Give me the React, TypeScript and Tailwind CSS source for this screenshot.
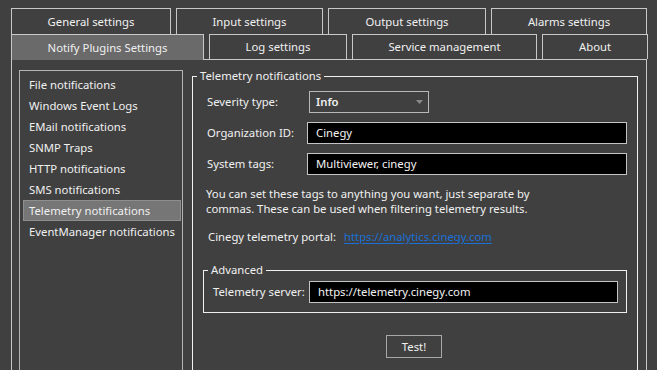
import React from "react";

const topTabs = [
  { label: "General settings", w: "w-[160px]" },
  { label: "Input settings", w: "w-[147px]" },
  { label: "Output settings", w: "w-[158px]" },
  { label: "Alarms settings", w: "w-[156px]" },
];

const bottomTabs = [
  { label: "Notify Plugins Settings", w: "w-[193px]", active: true },
  { label: "Log settings", w: "w-[138px]" },
  { label: "Service management", w: "w-[185px]" },
  { label: "About", w: "w-[106px]" },
];

const plugins = [
  "File notifications",
  "Windows Event Logs",
  "EMail notifications",
  "SNMP Traps",
  "HTTP notifications",
  "SMS notifications",
  "Telemetry notifications",
  "EventManager notifications",
];

function TextBox({ value, className = "" }: { value: string; className?: string }) {
  return (
    <div className={`h-[22px] bg-black border border-[#c4c4c4] flex items-center px-[8px] text-[#f2f2f2] whitespace-nowrap ${className}`}>
      {value}
    </div>
  );
}

export default function App() {
  return (
    <div
      className="w-[657px] h-[370px] overflow-hidden bg-[#404040] text-[#f0f0f0] text-[11.3px] leading-[16px] pt-[8px] pl-[11px]"
      style={{ fontFamily: '"Noto Sans", "Segoe UI", sans-serif' }}
    >
      {/* tab rows */}
      <div className="flex gap-[5px]">
        {topTabs.map((t) => (
          <div
            key={t.label}
            className={`${t.w} h-[26px] border-t border-x border-[#c8c8c8] flex items-center justify-center`}
          >
            {t.label}
          </div>
        ))}
      </div>
      <div className="flex gap-[5px]">
        {bottomTabs.map((t) => (
          <div
            key={t.label}
            className={`${t.w} border-t border-x border-[#c8c8c8] flex items-center justify-center ${
              t.active ? "h-[26px] -mb-px relative z-10 bg-[#6a6a6a]" : "h-[25px]"
            }`}
          >
            {t.label}
          </div>
        ))}
      </div>

      {/* panel */}
      <div className="w-[636px] h-[400px] border-t border-x border-[#c8c8c8] flex items-start pt-[10px] pl-[7px]">
        {/* list box */}
        <div className="w-[164px] shrink-0 h-[360px] border border-[#b4b4b4] pt-[3px] pl-[3px] pr-[1px]">
          {plugins.map((p) => (
            <div
              key={p}
              className={`h-[21px] flex items-center pl-[5px] whitespace-nowrap ${
                p === "Telemetry notifications" ? "bg-[#767676] border border-[#8e8e8e]" : "border border-transparent"
              }`}
            >
              {p}
            </div>
          ))}
        </div>

        {/* group box */}
        <div className="relative ml-[9px] mt-[6px] w-[446px] shrink-0 h-[360px] border border-[#f0f0f0] pt-[14px] pl-[14px] pr-[10px]">
          <span className="absolute -top-[9px] left-[4px] px-[3px] bg-[#404040] whitespace-nowrap">Telemetry notifications</span>

          <div className="flex items-center h-[22px]">
            <span className="w-[102px] shrink-0">Severity type:</span>
            <div className="w-[120px] h-[22px] border border-[#b8b8b8] flex items-center justify-between pl-[6px] pr-[5px]">
              <span className="font-semibold">Info</span>
              <svg width="7" height="4" viewBox="0 0 7 4">
                <path d="M0 0h7L3.5 4z" fill="#8a8a8a" />
              </svg>
            </div>
          </div>

          <div className="flex items-center mt-[9px]">
            <span className="w-[100px] shrink-0">Organization ID:</span>
            <TextBox value="Cinegy" className="flex-1" />
          </div>

          <div className="flex items-center mt-[9px]">
            <span className="w-[100px] shrink-0">System tags:</span>
            <TextBox value="Multiviewer, cinegy" className="flex-1" />
          </div>

          <p className="mt-[11px] -ml-px leading-[15px]">
            You can set these tags to anything you want, just separate by
            <br />
            commas. These can be used when filtering telemetry results.
          </p>

          <div className="flex items-center mt-[13px] ml-px h-[16px] whitespace-nowrap">
            <span className="w-[136px] shrink-0">Cinegy telemetry portal:</span>
            <span className="text-[#1a70d6] underline underline-offset-2">https://analytics.cinegy.com</span>
          </div>

          {/* advanced */}
          <div className="relative mt-[25px] -ml-[4px] h-[43px] border border-[#f0f0f0] pt-[10px] pl-[9px] pr-[8px]">
            <span className="absolute -top-[9px] left-[4px] px-[3px] bg-[#404040]">Advanced</span>
            <div className="flex items-center">
              <span className="w-[96px] shrink-0 whitespace-nowrap">Telemetry server:</span>
              <TextBox value="https://telemetry.cinegy.com" className="flex-1" />
            </div>
          </div>

          <div className="flex justify-center mt-[22px] pr-[6px]">
            <div className="w-[56px] h-[23px] border border-[#a8a8a8] flex items-center justify-center">Test!</div>
          </div>
        </div>
      </div>
    </div>
  );
}
